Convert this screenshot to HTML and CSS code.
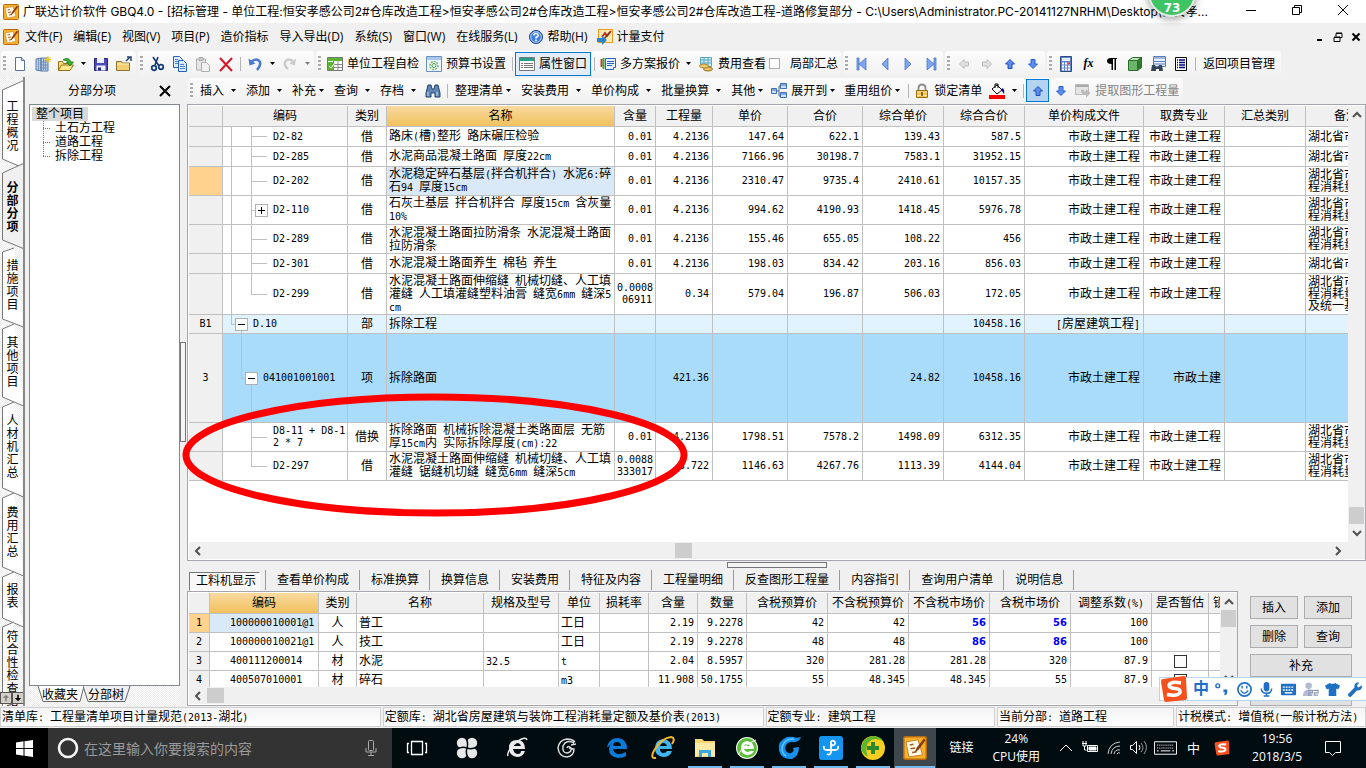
FILE: index.html
```html
<!DOCTYPE html>
<html lang="zh-CN">
<head>
<meta charset="utf-8">
<title>广联达计价软件 GBQ4.0</title>
<link rel="stylesheet" href="styles.css">
</head>
<body>
<svg class="defs" aria-hidden="true">
  <symbol id="app" viewBox="0 0 16 16"><rect x=".5" y=".5" width="15" height="15" rx="1" fill="#f8b12c" stroke="#b8690f"/><path d="M2 4l8-1.500 3 10L4 14z" fill="#fffbe8" stroke="#c07a20" stroke-width=".6"/><path d="M4.500 6l2.500-.5M5 8.500l3-.5M6 11l3-.5" stroke="#a06020"/><path d="M14 1.500L9 8l-1.500 3.500L10.500 9 15 3z" fill="#8a3b12"/></symbol>
  <symbol id="dd" viewBox="0 0 7 4"><path d="M1 0h5L3.500 3z" fill="#000"/></symbol>
  <symbol id="up" viewBox="0 0 16 16"><path d="M8 3.500l4.500 4.500h-2.500v4.500H6V8H3.500z" fill="#5b8def" stroke="#1d4fb8"/></symbol>
  <symbol id="down" viewBox="0 0 16 16"><path d="M8 12.500L3.500 8H6V3.500h4V8h2.500z" fill="#5b8def" stroke="#2a5fd0"/></symbol>
  <symbol id="clip" viewBox="0 0 16 16"><path d="M1.500 3h9v11h-9z" fill="#e6e6e6" stroke="#b0b0b0"/><path d="M4 1.500h4v3H4z" fill="#ccc" stroke="#aaa"/><path d="M6.500 6.500h5l3 3v6h-8z" fill="#f2f2f2" stroke="#b0b0b0"/></symbol>
  <symbol id="bino" viewBox="0 0 16 16"><path d="M3 2h3l1 4h2l1-4h3l2 8v4h-5v-4H6v4H1v-4z" fill="#5f84b4" stroke="#24456f"/><path d="M3 9v4M12 9v4" stroke="#c9dcf2"/></symbol>
  <symbol id="sg" viewBox="0 0 28 28"><path d="M3 4L24 1q2 0 2 2l1 20q0 2-2 2L6 27q-2 0-2-2L1 7q0-3 2-3z" fill="#f4511e"/><path d="M21 8q-10-2-12 2 0 3 6 3.500t5 4q-2 4-13 2" fill="none" stroke="#fff" stroke-width="3.600"/></symbol>
</svg>

<header class="title">
  <svg class="i16"><use href="#app"/></svg>
  <h1>广联达计价软件 GBQ4.0 - [招标管理 - 单位工程:恒安孝感公司2#仓库改造工程&gt;恒安孝感公司2#仓库改造工程&gt;恒安孝感公司2#仓库改造工程-道路修复部分 - C:\Users\Administrator.PC-20141127NRHM\Desktop\恒安孝...</h1>
  <div class="winbtns">
    <button aria-label="最小化"><svg viewBox="0 0 12 12"><path d="M1 6.500h10"/></svg></button>
    <button aria-label="还原"><svg viewBox="0 0 12 12"><path d="M1.500 3.500h7v7h-7zM3.500 3.500v-2h7v7h-2"/></svg></button>
    <button aria-label="关闭"><svg viewBox="0 0 12 12"><path d="M1 1l10 10M11 1L1 11"/></svg></button>
  </div>
</header>
<div class="ball">73</div>

<nav class="menu">
  <svg class="i16"><use href="#app"/></svg>
  <button>文件(F)</button><button>编辑(E)</button><button>视图(V)</button><button>项目(P)</button><button>造价指标</button><button>导入导出(D)</button><button>系统(S)</button><button>窗口(W)</button><button>在线服务(L)</button>
  <button class="ic"><svg class="i16" viewBox="0 0 16 16"><circle cx="8" cy="8" r="6.500" fill="#3f7de0" stroke="#1a3f8a"/><circle cx="8" cy="8" r="5.300" fill="none" stroke="#bcd6fb"/><path d="M5.800 6.500Q6 4.500 8 4.500t2.200 1.800Q10 7.500 8 8.500v1M8 10.500v1.500" fill="none" stroke="#fff" stroke-width="1.600"/></svg>帮助(H)</button>
  <button class="ic"><svg class="i16" viewBox="0 0 16 16"><rect x="1.500" y=".5" width="14" height="13" fill="#ffe9b5" stroke="#e89b1c"/><path d="M5 8l3-4 2 3 4-5" fill="none" stroke="#c0281c" stroke-width="1.800"/><path d="M13 3l-6 7" stroke="#7a3a1a" stroke-width="1.500"/><path d="M0 9h5V7l5 4-5 5v-3H0z" fill="#2a86c8"/></svg>计量支付</button>
  <div class="mdi">
    <button aria-label="最小化"><svg viewBox="0 0 10 10"><path d="M2 8h5" stroke-width="2"/></svg></button>
    <button aria-label="还原"><svg viewBox="0 0 10 10"><path d="M1 5.500h6v4H1zM3 4.500v-3h6v4H7M1 5h6M3 1h6"/></svg></button>
    <button aria-label="关闭"><svg viewBox="0 0 10 10"><path d="M1.500 1.500l7 7M8.500 1.500l-7 7" stroke-width="2"/></svg></button>
  </div>
</nav>

<div class="bar">
  <div class="grp">
    <i class="grip"></i>
    <button class="b" aria-label="新建"><svg class="i16" viewBox="0 0 16 16"><path d="M3.500 1.500h6l3 3v10h-9z" fill="#fff" stroke="#55749b"/><path d="M9.500 1.500v3h3" fill="#cfe0f4" stroke="#55749b"/></svg></button>
    <button class="b" aria-label="新建项目"><svg class="i16" viewBox="0 0 16 16"><path d="M1 3l5-1v13l-5-1zM6 2h7v13H6z" fill="#b8cfea" stroke="#5a7ba8"/><path d="M8.500 3v11M10.500 3v11M6 6h7M6 9h7M6 12h7M3.500 3v11" stroke="#5a7ba8" stroke-width=".7"/><path d="M13 0v7M9.500 3.500h7M10.500 1l5 5M15.500 1l-5 5" stroke="#f5c518"/></svg></button>
    <button class="b" aria-label="打开"><svg class="i16" viewBox="0 0 16 16"><path d="M.5 14.500v-9h4l1 2h6v2" fill="#f6dc7c" stroke="#94701c"/><path d="M.5 14.500l3-5.500h12l-3.500 5.500z" fill="#ffe88a" stroke="#94701c"/><path d="M5 4q5-4 8 2h2.500L12 10 8.500 6H10Q9 4 5 4z" fill="#35b335" stroke="#177a17" stroke-width=".8"/></svg></button>
    <button class="d" aria-label="更多"><svg><use href="#dd"/></svg></button>
    <button class="b" aria-label="保存"><svg class="i16" viewBox="0 0 16 16"><path d="M1.500 2.500h13v12h-13z" fill="#4a4ab8" stroke="#25257a"/><path d="M4 2h7v5H4zM3.500 9.500h9v5h-9z" fill="#eef0fb"/><path d="M5 11.500h3v3H5z" fill="#25257a"/></svg></button>
    <button class="b" aria-label="关闭项目"><svg class="i16" viewBox="0 0 16 16"><path d="M.5 14.500v-9h5l1 1.500h7v7.500z" fill="#f0d070" stroke="#8e7130"/><path d="M1 8h12" stroke="#fff1b8"/><path d="M10 5l4-4M11 1h4v4" stroke="#24456f" stroke-width="1.500" fill="none"/></svg></button>
  </div>
  <div class="grp">
    <i class="grip"></i>
    <button class="b" aria-label="剪切"><svg class="i16" viewBox="0 0 16 16"><path d="M4 1l6 9M9 1L6 9" stroke="#123a78" stroke-width="1.600"/><circle cx="5" cy="12" r="2.300" fill="none" stroke="#123a78" stroke-width="1.700"/><circle cx="12" cy="11" r="2.300" fill="none" stroke="#123a78" stroke-width="1.700"/></svg></button>
    <button class="b" aria-label="复制"><svg class="i16" viewBox="0 0 16 16"><path d="M1.500.5h6l3 3v8h-9z" fill="#dbe9fb" stroke="#2a62b8"/><path d="M6.500 4.500h5l3 3v8h-8z" fill="#dbe9fb" stroke="#2a62b8"/><path d="M3 3.500h3M3 5.500h3M3 7.500h3M8 8.500h4M8 10.500h5M8 12.500h5" stroke="#4a86dc"/></svg></button>
    <button class="b" aria-label="粘贴"><svg class="i16"><use href="#clip"/></svg></button>
    <button class="b" aria-label="删除"><svg class="i16" viewBox="0 0 16 16"><path d="M2 2l12 13M14 2L2 15" stroke="#d8152a" stroke-width="2"/></svg></button>
    <i class="sep"></i>
    <button class="b" aria-label="撤销"><svg class="i16" viewBox="0 0 16 16"><path d="M4 6q6-5 9 0 1 4-3 8" fill="none" stroke="#4a78d0" stroke-width="2.500"/><path d="M1.500 2.500l1 7 6-2z" fill="#4a78d0"/></svg></button>
    <button class="d" aria-label="更多"><svg><use href="#dd"/></svg></button>
    <button class="b" aria-label="重做"><svg class="i16" viewBox="0 0 16 16"><path d="M12 6Q6 1 3 6q-1 4 3 7" fill="none" stroke="#ccc" stroke-width="2.500"/><path d="M14 2.500l-1 7-6-2z" fill="#ccc"/></svg></button>
    <button class="d" aria-label="更多"><svg class="dim"><use href="#dd"/></svg></button>
  </div>
  <div class="grp">
    <i class="grip"></i>
    <button class="l"><svg class="i16" viewBox="0 0 16 16"><path d="M.5 1.500h15v13H.5z" fill="#fff" stroke="#777"/><path d="M1 2h14v3H1z" fill="#5cb531"/><path d="M1 8.500h14M1 11.500h14M6.500 5v9M11 5v9" stroke="#888"/><path d="M1 6h6v8H1z" fill="#5cb531"/><path d="M2 10l2 2 3-4" fill="none" stroke="#fff"/></svg>单位工程自检</button>
    <button class="l"><svg class="i16" viewBox="0 0 16 16"><path d="M.5.500h15v15H.5z" fill="#eef4fb" stroke="#6a8fc0"/><path d="M1 1h14v3H1z" fill="#a8c8ec"/><circle cx="8" cy="9.500" r="4" fill="none" stroke="#7cb87c" stroke-width="1.500" stroke-dasharray="2 1"/><circle cx="8" cy="9.500" r="2" fill="none" stroke="#4d9d4d"/></svg>预算书设置</button>
    <i class="sep"></i>
    <button class="l on"><svg class="i16" viewBox="0 0 16 16"><path d="M.5 1.500h15v13H.5z" fill="#fff" stroke="#777"/><path d="M1 2h14v3H1z" fill="#26a08c"/><path d="M2 7.500h2M5 7.500h9M2 9.500h2M5 9.500h9M2 11.500h2M5 11.500h9" stroke="#777"/></svg>属性窗口</button>
    <i class="sep"></i>
    <button class="l"><svg class="i16" viewBox="0 0 16 16"><path d="M1.500 3v8" stroke="#d33" stroke-width="2"/><path d="M3.500 2v11" stroke="#3a3" stroke-width="2"/><path d="M5.500 2.500h10v9h-2v2h-8z" fill="#e8f1fd" stroke="#2463c4"/><path d="M7 5.500h7M7 7.500h7M7 9.500h5" stroke="#2463c4"/></svg>多方案报价</button>
    <button class="d w" aria-label="更多"><svg><use href="#dd"/></svg></button>
    <button class="l"><svg class="i16" viewBox="0 0 16 16"><path d="M2.500 1.500h11v9h-11z" fill="#c9ecf5" stroke="#5aa8c0"/><path d="M3 4h10M3 7h10M6 2v8M10 2v8" stroke="#5aa8c0"/><ellipse cx="10" cy="13" rx="4.500" ry="2" fill="#eac060" stroke="#9a7020"/><ellipse cx="6" cy="10" rx="4.500" ry="2" fill="#f0ca70" stroke="#b08430"/></svg>费用查看</button>
    <label class="chk"><input type="checkbox">局部汇总</label>
  </div>
  <div class="grp">
    <i class="grip"></i>
    <button class="b" aria-label="首条"><svg class="i16" viewBox="0 0 16 16"><path d="M12 2v12L5 8zM3 2h2v12H3z" fill="#7da7ee" stroke="#3a6cc8" stroke-width=".7"/></svg></button>
    <button class="b" aria-label="上一条"><svg class="i16" viewBox="0 0 16 16"><path d="M11 2v12L5 8z" fill="#7da7ee" stroke="#3a6cc8" stroke-width=".7"/></svg></button>
    <button class="b" aria-label="下一条"><svg class="i16" viewBox="0 0 16 16"><path d="M5 2v12l6-6z" fill="#7da7ee" stroke="#3a6cc8" stroke-width=".7"/></svg></button>
    <button class="b" aria-label="末条"><svg class="i16" viewBox="0 0 16 16"><path d="M4 2v12l7-6zM11 2h2v12h-2z" fill="#7da7ee" stroke="#3a6cc8" stroke-width=".7"/></svg></button>
  </div>
  <div class="grp">
    <i class="grip"></i>
    <button class="b" aria-label="左移"><svg class="i16" viewBox="0 0 16 16"><path d="M3.500 8L8 3.500V6h4.500v4H8v2.500z" fill="#e2e2e2" stroke="#bcbcbc"/></svg></button>
    <button class="b" aria-label="右移"><svg class="i16" viewBox="0 0 16 16"><path d="M12.500 8L8 3.500V6H3.500v4H8v2.500z" fill="#e2e2e2" stroke="#bcbcbc"/></svg></button>
    <button class="b" aria-label="上移"><svg class="i16"><use href="#up"/></svg></button>
    <button class="b" aria-label="下移"><svg class="i16"><use href="#down"/></svg></button>
  </div>
  <div class="grp">
    <i class="grip"></i>
    <button class="b" aria-label="计算器"><svg class="i16" viewBox="0 0 16 16"><path d="M2.500.5h11v15h-11z" fill="#5f84c8" stroke="#2c4a86"/><path d="M4 2h8v3H4z" fill="#e4eefb"/><path d="M4 7.500h8M4 10.500h8M4 13.500h8" stroke="#fff" stroke-width="2" stroke-dasharray="2 1"/><path d="M10 7.500h2" stroke="#e03030" stroke-width="2"/></svg></button>
    <button class="b fx" aria-label="函数">fx</button>
    <button class="b" aria-label="段落"><svg class="i16" viewBox="0 0 16 16"><path d="M13 2v1h-1v11h-1.500V3H9v11H7.500V8Q3 8 3 5t4-3z" fill="#000"/></svg></button>
    <button class="b" aria-label="图元"><svg class="i16" viewBox="0 0 16 16"><path d="M1.500 4.500h9v10h-9z" fill="#6db56d" stroke="#2d6e2d"/><path d="M1.500 4.500l4-3h9l-4 3z" fill="#b8e4b8" stroke="#2d6e2d"/><path d="M10.500 4.500l4-3v10l-4 3z" fill="#2f7a2f" stroke="#2d6e2d"/></svg></button>
    <button class="b" aria-label="查找"><svg class="i16" viewBox="0 0 16 16"><path d="M3.500.5h12v10h-12z" fill="#e6effb" stroke="#5a7fb8"/><path d="M4 2h11M4 5.500h11M4 8h11" stroke="#5a7fb8"/><path d="M2 9h3l1 2h2l1-2h3l1 6H9v-2H6v2H1z" fill="#345"/></svg></button>
    <button class="b" aria-label="列表"><svg class="i16" viewBox="0 0 16 16"><path d="M2.500 1.500h11v13h-11z" fill="#fff" stroke="#000"/><path d="M4 4h1M6 4h6M4 6.500h1M6 6.500h6M4 9h1M6 9h6M4 11.500h1M6 11.500h6" stroke="#000080" stroke-width="1.300"/></svg></button>
    <i class="sep"></i>
    <button class="l t">返回项目管理</button>
  </div>
</div>

<div class="work">
  <nav class="vtabs">
    <button style="height:83px"><svg width="25" height="93"><path d="M23.500.500L2.500 10v69l21 9z"/></svg><span>工程概况</span></button>
    <button class="cur" style="height:79px"><svg width="25" height="89"><path d="M24.500 0L2.500 10v67l22 9z"/></svg><span>分部分项</span></button>
    <button style="height:77px"><svg width="25" height="87"><path d="M14 6L2.500 10v67l21 8"/></svg><span>措施项目</span></button>
    <button style="height:78px"><svg width="25" height="88"><path d="M14 5L2.500 10v68l21 9"/></svg><span>其他项目</span></button>
    <button style="height:91px"><svg width="25" height="101"><path d="M14 5L2.500 10v81l21 9"/></svg><span>人材机汇总</span></button>
    <button style="height:79px"><svg width="25" height="89"><path d="M14 5L2.500 10v69l21 9"/></svg><span>费用汇总</span></button>
    <button style="height:50px"><svg width="25" height="60"><path d="M14 5L2.500 10v41l21 9"/></svg><span>报表</span></button>
    <button style="height:96px"><svg width="25" height="106"><path d="M14 5L2.500 10v95"/></svg><span>符合性检查<br>结</span></button>
    <div class="vscroll"><button aria-label="上" disabled><svg viewBox="0 0 10 10"><path d="M5 1l4 4H6v4H4V5H1z" fill="#808080"/></svg></button><button aria-label="下"><svg viewBox="0 0 10 10"><path d="M5 9L1 5h3V1h2v4h3z" fill="#000"/></svg></button></div>
  </nav>

  <aside class="side">
    <div class="sidehead"><h2>分部分项</h2><button aria-label="关闭"><svg viewBox="0 0 12 12"><path d="M1 1l10 10M11 1L1 11" stroke="#000" stroke-width="2"/></svg></button></div>
    <div class="tree">
      <span class="root">整个项目</span>
      <ul><li>土石方工程</li><li>道路工程</li><li>拆除工程</li></ul>
    </div>
    <div class="btabs">
      <button><svg width="48" height="17"><path d="M1 0l5 15.500h37l4-15.500" fill="#fff" stroke="#666"/></svg><span>收藏夹</span></button><button><svg width="48" height="17"><path d="M0 0l5 15.500h37l5-15.500" fill="#f0f0f0" stroke="#666"/></svg><span>分部树</span></button>
    </div>
  </aside>
  <div class="vsplit"><i></i></div>

  <main class="main">
    <div class="bar two">
      <div class="grp">
        <i class="grip"></i>
        <button class="t a w">插入<svg><use href="#dd"/></svg></button><button class="t a w">添加<svg><use href="#dd"/></svg></button><button class="t a">补充<svg><use href="#dd"/></svg></button><button class="t a w">查询<svg><use href="#dd"/></svg></button><button class="t a w">存档<svg><use href="#dd"/></svg></button>
        <button class="b" aria-label="查找"><svg class="i16"><use href="#bino"/></svg></button>
        <i class="sep"></i>
        <button class="t a">整理清单<svg><use href="#dd"/></svg></button><button class="t a w">安装费用<svg><use href="#dd"/></svg></button><button class="t a w">单价构成<svg><use href="#dd"/></svg></button><button class="t a w">批量换算<svg><use href="#dd"/></svg></button><button class="t a">其他<svg><use href="#dd"/></svg></button>
        <button class="l a"><svg class="i16" viewBox="0 0 16 16"><path d="M4 8h4M8 3v10M8 3h2M8 13h2" stroke="#567" fill="none"/><path d="M.5 5.500h5v5h-5zM9.500.500h6v5h-6zM9.500 9.500h6v5h-6z" fill="#cfe1f8" stroke="#3d6fb8"/><path d="M1 7h4M10 2h5M10 11h5" stroke="#3d6fb8"/></svg>展开到<svg class="ar"><use href="#dd"/></svg></button>
        <button class="t a">重用组价<svg><use href="#dd"/></svg></button>
        <i class="sep"></i>
        <button class="l"><svg class="i16" viewBox="0 0 16 16"><path d="M4.500 7V4.500Q5 1.500 8 1.500t3.500 3V7" fill="none" stroke="#8c8c8c" stroke-width="1.800"/><path d="M2.500 7.500h11v7h-11z" fill="#f2c24a" stroke="#9a6c12"/><path d="M3 9h10M3 12.500h10" stroke="#fbe6a6"/><path d="M8 9v4" stroke="#6a4a10" stroke-width="1.500"/></svg>锁定清单</button>
        <button class="b" aria-label="填充颜色"><svg class="i16" viewBox="0 0 16 16"><path d="M3 6l5-4 5 5-5 4z" fill="#fff" stroke="#000"/><path d="M6 5V1h3v4" fill="none" stroke="#000"/><path d="M13 5q3 1 2 6l-2-3z" fill="#000080"/><path d="M0 12h16v4H0z" fill="#f00"/></svg></button><button class="d" aria-label="更多"><svg><use href="#dd"/></svg></button>
        <i class="sep"></i>
        <button class="b on" aria-label="上移"><svg class="i16"><use href="#up"/></svg></button><button class="b" aria-label="下移"><svg class="i16"><use href="#down"/></svg></button>
        <button class="l dis" disabled><svg class="i16" viewBox="0 0 16 16"><path d="M.5 1.500h13v10H.5z" fill="#e4e4e4" stroke="#bbb"/><path d="M1 3h12" stroke="#aaa" stroke-width="2"/><path d="M6 7q0 5 5 5v3l4.500-5L11 6v2.500q-2 0-3-2z" fill="#bbb"/></svg>提取图形工程量</button>
      </div>
    </div>

    <section class="panel top">
      <div class="clip">
      <table class="grid g1">
        <colgroup><col class="c34"><col class="c125"><col class="c39"><col class="c228"><col class="c41"><col class="c57"><col class="c75"><col class="c75"><col class="c81"><col class="c81"><col class="c119"><col class="c81"><col class="c81"><col></colgroup>
        <thead><tr><th></th><th>编码</th><th>类别</th><th class="hot">名称</th><th>含量</th><th>工程量</th><th>单价</th><th>合价</th><th>综合单价</th><th>综合合价</th><th>单价构成文件</th><th>取费专业</th><th>汇总类别</th><th class="rem">备注</th></tr></thead>
        <tbody>
        <tr class="h20"><th></th><td class="k leaf">D2-82</td><td class="c">借</td><td>路床<b>(</b>槽<b>)</b>整形<b> </b>路床碾压检验</td><td class="n">0.01</td><td class="n">4.2136</td><td class="n">147.64</td><td class="n">622.1</td><td class="n">139.43</td><td class="n">587.5</td><td class="r">市政土建工程</td><td class="r">市政土建工程</td><td></td><td>湖北省市</td></tr>
        <tr class="h20"><th></th><td class="k leaf">D2-285</td><td class="c">借</td><td>水泥商品混凝土路面<b> </b>厚度<b>22cm</b></td><td class="n">0.01</td><td class="n">4.2136</td><td class="n">7166.96</td><td class="n">30198.7</td><td class="n">7583.1</td><td class="n">31952.15</td><td class="r">市政土建工程</td><td class="r">市政土建工程</td><td></td><td>湖北省市</td></tr>
        <tr class="h29"><th class="sel"></th><td class="k leaf">D2-202</td><td class="c">借</td><td class="pick">水泥稳定碎石基层<b>(</b>拌合机拌合<b>) </b>水泥<b>6:</b>碎<br>石<b>94 </b>厚度<b>15cm</b></td><td class="n">0.01</td><td class="n">4.2136</td><td class="n">2310.47</td><td class="n">9735.4</td><td class="n">2410.61</td><td class="n">10157.35</td><td class="r">市政土建工程</td><td class="r">市政土建工程</td><td></td><td>湖北省市<br>程消耗量</td></tr>
        <tr class="h29"><th></th><td class="k stem"><div><button class="tg" aria-label="展开"><svg viewBox="0 0 11 11"><path d="M2 5.500h7M5.500 2v7"/></svg></button>D2-110</div></td><td class="c">借</td><td>石灰土基层<b> </b>拌合机拌合<b> </b>厚度<b>15cm </b>含灰量<br><b>10%</b></td><td class="n">0.01</td><td class="n">4.2136</td><td class="n">994.62</td><td class="n">4190.93</td><td class="n">1418.45</td><td class="n">5976.78</td><td class="r">市政土建工程</td><td class="r">市政土建工程</td><td></td><td>湖北省市<br>程消耗量</td></tr>
        <tr class="h29"><th></th><td class="k leaf">D2-289</td><td class="c">借</td><td>水泥混凝土路面拉防滑条<b> </b>水泥混凝土路面<br>拉防滑条</td><td class="n">0.01</td><td class="n">4.2136</td><td class="n">155.46</td><td class="n">655.05</td><td class="n">108.22</td><td class="n">456</td><td class="r">市政土建工程</td><td class="r">市政土建工程</td><td></td><td>湖北省市<br>程消耗量</td></tr>
        <tr class="h20"><th></th><td class="k leaf">D2-301</td><td class="c">借</td><td>水泥混凝土路面养生<b> </b>棉毡<b> </b>养生</td><td class="n">0.01</td><td class="n">4.2136</td><td class="n">198.03</td><td class="n">834.42</td><td class="n">203.16</td><td class="n">856.03</td><td class="r">市政土建工程</td><td class="r">市政土建工程</td><td></td><td>湖北省市</td></tr>
        <tr class="h41"><th></th><td class="k leaf end">D2-299</td><td class="c">借</td><td>水泥混凝土路面伸缩缝<b> </b>机械切缝、人工填<br>灌缝<b> </b>人工填灌缝塑料油膏<b> </b>缝宽<b>6mm </b>缝深<b>5</b><br><b>cm</b></td><td class="n">0.0008<br>06911</td><td class="n">0.34</td><td class="n">579.04</td><td class="n">196.87</td><td class="n">506.03</td><td class="n">172.05</td><td class="r">市政土建工程</td><td class="r">市政土建工程</td><td></td><td>湖北省市<br>程消耗量<br>及统一基</td></tr>
        <tr class="h19 lv1"><th>B1</th><td class="k p1"><div><button class="tg" aria-label="折叠"><svg viewBox="0 0 11 11"><path d="M2 5.500h7"/></svg></button>D.10</div></td><td class="c">部</td><td>拆除工程</td><td></td><td></td><td></td><td></td><td></td><td class="n">10458.16</td><td class="r"><b>[</b>房屋建筑工程<b>]</b></td><td></td><td></td><td></td></tr>
        <tr class="h89 lv2"><th>3</th><td class="k p2"><div><button class="tg" aria-label="折叠"><svg viewBox="0 0 11 11"><path d="M2 5.500h7"/></svg></button>041001001001</div></td><td class="c">项</td><td>拆除路面</td><td></td><td class="n">421.36</td><td></td><td></td><td class="n">24.82</td><td class="n">10458.16</td><td class="r">市政土建工程</td><td class="r">市政土建</td><td></td><td></td></tr>
        <tr class="h29"><th></th><td class="k leaf solo">D8-11 + D8-1<br>2 * 7</td><td class="c">借换</td><td>拆除路面<b> </b>机械拆除混凝土类路面层<b> </b>无筋<br>厚<b>15cm</b>内<b> </b>实际拆除厚度<b>(cm):22</b></td><td class="n">0.01</td><td class="n">4.2136</td><td class="n">1798.51</td><td class="n">7578.2</td><td class="n">1498.09</td><td class="n">6312.35</td><td class="r">市政土建工程</td><td class="r">市政土建工程</td><td></td><td>湖北省市<br>程消耗量</td></tr>
        <tr class="h29"><th></th><td class="k leaf solo end">D2-297</td><td class="c">借</td><td>水泥混凝土路面伸缩缝<b> </b>机械切缝、人工填<br>灌缝<b> </b>锯缝机切缝<b> </b>缝宽<b>6mm </b>缝深<b>5cm</b></td><td class="n">0.0088<br>333017</td><td class="n">3.722</td><td class="n">1146.63</td><td class="n">4267.76</td><td class="n">1113.39</td><td class="n">4144.04</td><td class="r">市政土建工程</td><td class="r">市政土建工程</td><td></td><td>湖北省市<br>程消耗量</td></tr>
        </tbody>
      </table>
      </div>
      <div class="vs"><svg viewBox="0 0 10 10"><path d="M1 7l4-4 4 4"/></svg><i class="low"></i><svg viewBox="0 0 10 10"><path d="M1 3l4 4 4-4"/></svg></div>
      <div class="hs"><svg viewBox="0 0 10 10"><path d="M7 1L3 5l4 4"/></svg><i class="mid"></i><svg viewBox="0 0 10 10"><path d="M3 1l4 4-4 4"/></svg></div>
    </section>

    <div class="hsplit"><i></i></div>
    <nav class="ltabs"><button class="cur">工料机显示</button><button>查看单价构成</button><button>标准换算</button><button>换算信息</button><button>安装费用</button><button>特征及内容</button><button>工程量明细</button><button>反查图形工程量</button><button>内容指引</button><button>查询用户清单</button><button>说明信息</button></nav>

    <div class="lower">
      <section class="panel">
        <div class="clip">
        <table class="grid g2">
          <colgroup><col class="c21"><col class="c109"><col class="c38"><col class="c127"><col class="c75"><col class="c41"><col class="c49"><col class="c49"><col class="c49"><col class="c81"><col class="c81"><col class="c81"><col class="c81"><col class="c81"><col class="c57"><col></colgroup>
          <thead><tr><th></th><th class="hot">编码</th><th>类别</th><th>名称</th><th>规格及型号</th><th>单位</th><th>损耗率</th><th>含量</th><th>数量</th><th>含税预算价</th><th>不含税预算价</th><th>不含税市场价</th><th>含税市场价</th><th>调整系数<b>(%)</b></th><th>是否暂估</th><th class="lock">锁定</th></tr></thead>
          <tbody>
          <tr><th class="sel">1</th><td class="k pick">100000010001@1</td><td class="c">人</td><td>普工</td><td></td><td>工日</td><td></td><td class="n">2.19</td><td class="n">9.2278</td><td class="n">42</td><td class="n">42</td><td class="n blue">56</td><td class="n blue">56</td><td class="n">100</td><td></td><td></td></tr>
          <tr><th>2</th><td class="k">100000010021@1</td><td class="c">人</td><td>技工</td><td></td><td>工日</td><td></td><td class="n">2.19</td><td class="n">9.2278</td><td class="n">48</td><td class="n">48</td><td class="n blue">86</td><td class="n blue">86</td><td class="n">100</td><td></td><td></td></tr>
          <tr><th>3</th><td class="k">400111200014</td><td class="c">材</td><td>水泥</td><td><b>32.5</b></td><td><b>t</b></td><td></td><td class="n">2.04</td><td class="n">8.5957</td><td class="n">320</td><td class="n">281.28</td><td class="n">281.28</td><td class="n">320</td><td class="n">87.9</td><td class="c"><input type="checkbox" aria-label="暂估"></td><td></td></tr>
          <tr><th>4</th><td class="k">400507010001</td><td class="c">材</td><td>碎石</td><td></td><td><b>m3</b></td><td></td><td class="n">11.908</td><td class="n">50.1755</td><td class="n">55</td><td class="n">48.345</td><td class="n">48.345</td><td class="n">55</td><td class="n">87.9</td><td class="c"><input type="checkbox" aria-label="暂估"></td><td></td></tr>
          </tbody>
        </table>
        </div>
        <div class="vs"><svg viewBox="0 0 10 10"><path d="M1 7l4-4 4 4"/></svg><i></i><svg class="last" viewBox="0 0 10 10"><path d="M1 3l4 4 4-4"/></svg></div>
        <div class="hs"><svg viewBox="0 0 10 10"><path d="M7 1L3 5l4 4"/></svg><i></i></div>
      </section>
      <div class="acts"><button>插入</button><button>添加</button><button>删除</button><button>查询</button><button class="full">补充</button><button class="full" aria-label="更多操作"></button></div>
    </div>
  </main>
</div>

<footer class="status"><span>清单库<b>: </b>工程量清单项目计量规范<b>(2013-</b>湖北<b>)</b></span><span>定额库<b>: </b>湖北省房屋建筑与装饰工程消耗量定额及基价表<b>(2013)</b></span><span>定额专业<b>: </b>建筑工程</span><span>当前分部<b>: </b>道路工程</span><span>计税模式<b>: </b>增值税<b>(</b>一般计税方法<b>)</b></span></footer>

<div class="taskbar">
  <button class="start" aria-label="开始"><svg width="17" height="17" viewBox="0 0 17 17"><path d="M0 2.500L7.500 1.300V8H0zM8.500 1.200L17 0v8H8.500zM0 9h7.500v6.700L0 14.500zM8.500 9H17v8l-8.500-1.200z" fill="#fff"/></svg></button>
  <div class="search"><svg width="24" height="24"><circle cx="12" cy="12" r="9" fill="none" stroke="#f4f4f4" stroke-width="2.600"/></svg><input type="text" aria-label="搜索" placeholder="在这里输入你要搜索的内容"><svg width="14" height="18" viewBox="0 0 14 18"><rect x="4.500" y="1.500" width="5" height="10" rx="1" fill="none" stroke="#aaa"/><path d="M2 9v4h10V9M7 13v4M4 16.500h6" fill="none" stroke="#aaa"/></svg></div>
  <div class="apps">
    <button class="wd" aria-label="任务视图"><svg viewBox="0 0 24 24"><path d="M6.500 5.500h11v13h-11zM4 7.500H2.500v9H4M20 7.500h1.500v9H20" fill="none" stroke="#fff" stroke-width="1.300"/></svg></button>
    <button class="wd" aria-label="风扇"><svg viewBox="0 0 24 24"><g fill="#e8e8e8"><circle cx="7" cy="7" r="5.200"/><circle cx="17" cy="7" r="5.200"/><circle cx="7" cy="17" r="5.200"/><circle cx="17" cy="17" r="5.200"/><path d="M7 7h10v10H7z"/></g><path d="M12 12Q14 6 10 1M12 12q6 2 11-2M12 12q-2 6 2 11M12 12Q6 10 1 14" stroke="#010c11" fill="none" stroke-width="1.500"/></svg></button>
    <button class="wd" aria-label="浏览器"><svg viewBox="0 0 24 24"><path d="M20 15q-2 6-8 6-8-1-8-9t8-8q8 0 8 9H8q1 5 5 5 3 0 3-3zM8 10h8q-1-3-4-3t-4 3z" fill="#ececec" fill-rule="evenodd"/><path d="M3 20Q1 15 13 5q8-5 9-1" fill="none" stroke="#ececec" stroke-width="1.500"/></svg></button>
    <button class="wd" aria-label="助手"><svg viewBox="0 0 24 24"><path d="M20 6q-3-3-8-3-8 1-9 9 1 9 9 9 7-1 7-8l-5-1M19 7q-8-4-11 3-1 7 4 7 5-1 4-5-3-3-4 0M16 9l5-1" fill="none" stroke="#ddd" stroke-width="1.500"/></svg></button>
    <button class="wd" aria-label="Edge"><svg viewBox="0 0 24 24"><path d="M2 11Q4 2 13 2q9 1 9 11H8q1 5 6 5 4 0 7-2v4q-3 2-8 2-9-1-9-9 0-5 6-7-2 2-2 4h8q0-4-4-4-5 0-9 5z" fill="#0a7bd8"/></svg></button>
    <button aria-label="IE"><svg viewBox="0 0 24 24"><path d="M21 15q-2 6-9 6-8-1-8-9t8-9q9 1 9 10H9q0 4 3.500 4 2.500 0 3.500-2zM9 10h7q-1-3-3.500-3T9 10z" fill="#42b4f0" fill-rule="evenodd"/><path d="M5 22Q-2 23 4 13 11 2 20 1q5 1 1 7" fill="none" stroke="#f0b92c" stroke-width="2"/></svg></button>
    <button class="run" aria-label="资源管理器"><svg viewBox="0 0 24 24"><path d="M2 3h7l2 2h11v16H2z" fill="#f7d774"/><path d="M2 7h20v13H2z" fill="#fce9a5"/><path d="M6 21v-7h12v7h-3v-4H9v4z" fill="#3ba7e0"/></svg></button>
    <button class="run" aria-label="安全浏览器"><svg viewBox="0 0 24 24"><circle cx="12" cy="12" r="11" fill="#f3fbef"/><circle cx="12" cy="12" r="10" fill="#5bbf3a"/><path d="M19 15q-2 4-7 4-6-1-6-7t6-7q7 1 7 8H9q1 3 4 3l3-1zM9 10h6q-1-2-3-2t-3 2z" fill="#fff" fill-rule="evenodd"/><path d="M3 19Q8 9 21 4" stroke="#fff" fill="none"/></svg></button>
    <button class="run" aria-label="广联达"><svg viewBox="0 0 24 24"><path d="M24 1q-2 6-9 5-6 0-7 6 1 6 6 5 4-2 2-5l6-1q0 9-7 12-10 1-13-8Q0 5 10 1q7-1 9 1z" fill="#1690ec"/><path d="M17 3Q7 2 5 12q0 6 4 8" fill="none" stroke="#5cc8ff" stroke-width="1.500"/></svg></button>
    <button class="run" aria-label="驱动"><svg viewBox="0 0 24 24"><rect width="24" height="24" rx="3" fill="#1496f0"/><path d="M12 5v11q-1 4-4 2M12 5q4-1 4 2t-4 2M5 10q-1 4 3 4h8q4 0 3-4" fill="none" stroke="#fff" stroke-width="1.800"/></svg></button>
    <button class="run" aria-label="安全卫士"><svg viewBox="0 0 24 24"><circle cx="12" cy="12" r="12" fill="#f8cf20"/><path d="M0 12Q2 1 12 0q7 0 10 5-8-4-13 0-6 5-2 16-6-3-7-9z" fill="#5fb52b"/><path d="M10 6h4v4h4v4h-4v4h-4v-4H6v-4h4z" fill="#2b8b2b"/></svg></button>
    <button class="run act" aria-label="计价软件"><svg viewBox="0 0 16 16"><use href="#app"/></svg></button>
  </div>
  <div class="tray">
    <button>链接</button>
    <div class="cpu">24%<br>CPU使用</div>
    <div class="ti">
    <svg viewBox="0 0 18 18"><path d="M3 12l6-6 6 6"/></svg>
    <svg viewBox="0 0 18 18"><path d="M6.500 6.500h10v6h-10z"/><path d="M8 8h7v3H8z" fill="#fff"/><path d="M1 4.500h5M2 2v2M5 2v2M2 5v2h3V5M3.500 7v4h2"/></svg>
    <svg viewBox="0 0 18 18"><path d="M3 15Q4 4 15 3M6 15q1-8 9-8M9 15q1-5 6-4M12 15q1-2 3-1" stroke="#ccc"/></svg>
    <svg viewBox="0 0 18 18"><path d="M1.500 6.500h2l4-4v12l-4-4h-2zM10 6q2 3 0 5"/><path d="M12 4q4 5 0 9M15 2q5 6 0 13" stroke="#999"/></svg>
    </div>
    <svg class="kb" viewBox="0 0 24 14"><path d="M.5.500h23v13H.5z"/><path d="M3 4h18M3 7h18" stroke-dasharray="1 1"/><path d="M3 10h2M7 10h10M19 10h2"/></svg>
    <span class="zh">中</span>
    <svg class="sgi" viewBox="0 0 28 28"><use href="#sg"/></svg>
    <time>19:56<br>2018/3/5</time>
    <svg class="note" viewBox="0 0 18 18"><path d="M1.500 2.500h15v11h-5l-3 3-3-3h-4z"/></svg>
  </div>
</div>

<svg class="mark" viewBox="0 0 508 124"><ellipse cx="254" cy="62" rx="249" ry="58" fill="none" stroke="#f00" stroke-width="7"/></svg>

<div class="ime">
  <svg class="big" viewBox="0 0 28 28"><use href="#sg"/></svg>
  <strong>中</strong>
  <svg viewBox="0 0 18 18"><circle cx="4" cy="5" r="2" fill="none" stroke="#1f6fc5" stroke-width="1.500"/><path d="M10 9h4v3q0 3-3 3v-2q1 0 1-1h-2z" fill="#1f6fc5"/></svg>
  <svg viewBox="0 0 18 18"><circle cx="9" cy="9" r="7" fill="none" stroke="#1f6fc5" stroke-width="1.800"/><path d="M5 10q4 6 8 0M6.500 5v3M11.500 5v3" fill="none" stroke="#1f6fc5" stroke-width="1.500"/></svg>
  <svg viewBox="0 0 18 18"><rect x="6" y="1" width="6" height="10" rx="3" fill="#1f6fc5"/><path d="M3.500 8q0 5 5.500 5t5.500-5M9 13v3M6 16h6" fill="none" stroke="#1f6fc5" stroke-width="1.600"/></svg>
  <svg viewBox="0 0 18 18"><rect x="1" y="3" width="16" height="12" rx="1" fill="#1f6fc5"/><path d="M3 6.500h12M3 9.500h12" stroke="#fff" stroke-width="1.500" stroke-dasharray="2 1"/><path d="M5 12.500h8" stroke="#fff" stroke-width="1.500"/></svg>
  <svg viewBox="0 0 18 18"><circle cx="7" cy="5" r="3.500" fill="#b4bcd4"/><path d="M1 16q0-7 6-7 2 0 3 1v6z" fill="#b4bcd4"/><path d="M6 10h5v2.500H7V15h4M12 10h5v2.500h-4V15h4" fill="none" stroke="#8f9abb" stroke-width="1.300"/></svg>
  <svg viewBox="0 0 18 18"><path d="M6 2q3 2 6 0l5 3-2 4-2-1v8H5V8L3 9 1 5z" fill="#1f6fc5"/></svg>
  <svg viewBox="0 0 18 18"><path d="M2 14l7-7q-1-4 3-5.500h2L11.500 5l1.500 2 4-2.500q0 6-5.500 5.500l-6.500 7q-3-.5-3-3z" fill="#1f6fc5"/></svg>
</div>
</body>
</html>
```

FILE: styles.css
```css
* { box-sizing: border-box; }
html, body { margin: 0; height: 100%; }
body {
  display: flex; flex-direction: column; height: 100vh; overflow: hidden; position: relative;
  background: #f0f0f0; color: #000;
  font: 12px/14px "Liberation Sans", "Noto Sans CJK SC", sans-serif;
}
button { font: inherit; color: inherit; background: none; border: 0; padding: 0; margin: 0; white-space: nowrap; }
h1, h2 { margin: 0; font: inherit; }
.defs { position: absolute; width: 0; height: 0; }
.i16 { width: 16px; height: 16px; flex: none; }
b { font: 10px/12px "DejaVu Sans Mono", monospace; white-space: pre; }

/* title and menu */
.title { display: flex; align-items: center; height: 23px; flex: none; background: #fff; padding-left: 3px; gap: 4px; font-family: Inter, "Noto Sans CJK SC", sans-serif; }
.title h1 { flex: none; white-space: nowrap; }
.winbtns { display: flex; margin-left: auto; }
.winbtns button { width: 46px; height: 22px; }
.winbtns svg { width: 12px; height: 12px; fill: none; stroke: #000; }
.ball { position: absolute; left: 1148px; top: -31px; width: 48px; height: 48px; border-radius: 50%; border: 2px solid #e4ebe4; background: #3fc463; color: #fff; font: bold 12px/74px "DejaVu Sans", sans-serif; text-align: center; box-shadow: 0 2px 8px #0006; }
.menu { display: flex; align-items: center; gap: 1px; height: 27px; flex: none; padding-left: 3px; font-family: "Open Sans", "Noto Sans CJK SC", sans-serif; }
.menu > button { padding: 0 5px; height: 24px; }
.menu .ic { display: flex; align-items: center; gap: 4px; padding: 0 4px; }
.mdi { margin-left: auto; display: flex; gap: 8px; padding-right: 5px; }
.mdi svg { width: 10px; height: 10px; fill: none; stroke: #000; display: block; }

/* toolbars */
.bar { display: flex; gap: 2px; height: 27px; flex: none; padding: 1px 0 0 1px; }
.grp { display: flex; align-items: center; height: 25px; background: linear-gradient(#fcfcfc, #f1f1f1); border-radius: 3px; padding-right: 1px; }
.grip { width: 3px; height: 15px; margin: 0 2px; background: repeating-linear-gradient(#aaa 0 2px, transparent 2px 4px); flex: none; }
.sep { width: 1px; height: 14px; background: #b4b4b4; margin: 0 2px 0 3px; flex: none; }
.b { width: 23px; height: 23px; display: grid; place-items: center; flex: none; }
.d { width: 12px; height: 23px; display: grid; place-items: center; }
.d.w { width: 14px; }
.d svg, .a svg:last-child { width: 7px; height: 4px; flex: none; }
.dim { opacity: .5; }
.l { display: flex; align-items: center; height: 24px; gap: 4px; padding: 0 3px 0 4px; }
.l.on { border: 1px solid #0078d7; background: #e3edf7; padding: 0 3px; }
.l.on ~ .l { padding: 0 1px 0 3px; }
.l.t { padding: 0 5px; }
.b.on { border: 1px solid #0078d7; background: #b3d3f1; }
.fx { font: italic bold 12px "Liberation Serif", serif; }
.chk { display: flex; align-items: center; gap: 10px; padding: 0 2px; white-space: nowrap; }
input[type="checkbox"] { appearance: none; margin: 0; width: 11px; height: 11px; border: 1px solid #aaa; background: #fcfcfc; }
.t.a { display: flex; align-items: center; height: 23px; padding: 0 4px 0 5px; gap: 2px; }
.t.a.w { gap: 6px; }
.two .l { padding: 0 3px; }
.l.a .ar { margin-left: -2px; }
.dis { color: #838383; }

/* work area */
.work { flex: 1; display: flex; min-height: 0; }
.vtabs { width: 25px; flex: none; position: relative; padding-top: 8px; overflow: hidden; border-right: 2px solid #888; background: repeating-conic-gradient(#fff 0 25%, #ebebeb 0 50%) 0 0 / 2px 2px; }
.vtabs > button { display: block; position: relative; width: 25px; }
.vtabs > button > svg { position: absolute; left: 0; top: -5px; fill: #fff; stroke: #777; }
.vtabs > button > span { position: relative; display: block; width: 12px; margin: 0 auto; white-space: normal; line-height: 13px; word-break: break-all; }
.vtabs .cur { z-index: 1; font-weight: bold; }
.vtabs .cur > svg { fill: #f0f0f0; }
.vscroll { position: absolute; left: 0; bottom: 2px; display: flex; z-index: 2; }
.vscroll button { width: 12px; height: 12px; background: #d4d0c8; border: 1px solid #555; padding: 0; display: grid; place-items: center; }
.vscroll svg { width: 8px; height: 8px; }
.side { width: 151px; margin-left: 4px; flex: none; display: flex; flex-direction: column; }
.sidehead { height: 27px; display: flex; align-items: center; justify-content: space-between; padding: 0 9px 0 39px; }
.sidehead svg { width: 12px; height: 12px; display: block; }
.tree { flex: 1; border: 1px solid #828790; background: #fff; padding: 2px; }
.root { display: block; width: 56px; height: 14px; padding-left: 4px; background: #d9d9d9; }
.tree ul { list-style: none; margin: 0 0 0 11px; padding: 0; }
.tree li {
  padding-left: 12px;
  background-image: repeating-linear-gradient(90deg, #777 0 1px, #fff 1px 2px), repeating-linear-gradient(#777 0 1px, #fff 1px 2px);
  background-repeat: no-repeat; background-position: 0 7px, 0 0; background-size: 8px 1px, 1px 100%;
}
.tree li:last-child { background-size: 8px 1px, 1px 7px; }
.btabs { height: 20px; flex: none; padding-left: 8px; display: flex; background: repeating-conic-gradient(#fff 0 25%, #ebebeb 0 50%) 0 0 / 2px 2px; }
.btabs button { position: relative; width: 46px; height: 17px; }
.btabs svg { position: absolute; left: 0; top: 0; }
.btabs span { position: relative; }
.vsplit { width: 7px; flex: none; display: flex; align-items: center; }
.vsplit i { width: 6px; height: 100px; border: 1px solid #777; background: #f4f4f4; }

/* data panels */
.main { flex: 1; min-width: 0; display: flex; flex-direction: column; }
.panel { display: grid; grid-template: minmax(0, 1fr) 17px / minmax(0, 1fr) 17px; border: 1px solid #a5a5ad; min-height: 0; padding: 1px 0 1px 1px; background: #fff; }
.top { flex: 1; }
.clip { overflow: hidden; }
.grid { table-layout: fixed; width: 100%; border-collapse: separate; border-spacing: 0; }
.grid th, .grid td { border-right: 1px solid #c0c0c0; border-bottom: 1px solid #c0c0c0; padding: 0 2px; line-height: 12px; overflow: hidden; white-space: nowrap; font-weight: normal; text-align: left; vertical-align: middle; }
.grid tr > :last-child { border-right: 0; }
.grid th { background: #f0f0f0; text-align: center; padding: 0; }
.grid tbody th, .grid .n, .grid .k { font: 10px/12px "DejaVu Sans Mono", monospace; }
.grid .hot { background: linear-gradient(#f9d99f, #f1c15f); }
.grid .sel { background: #ffd28d; }
.grid .pick { background: #d9e9f8; }
.grid .n, .grid .r { text-align: right; padding-right: 3px; }
.grid .c { text-align: center; }
.grid .rem { text-align: left; padding-left: 28px; }
.grid .lock { text-align: left; padding-left: 4px; }
.grid .blue { color: #00f; font: bold 10px/12px "DejaVu Sans", sans-serif; }
.c21 { width: 21px; } .c34 { width: 34px; } .c38 { width: 38px; } .c39 { width: 39px; } .c41 { width: 41px; }
.c49 { width: 49px; } .c57 { width: 57px; } .c75 { width: 75px; } .c81 { width: 81px; } .c109 { width: 109px; }
.c119 { width: 119px; } .c125 { width: 125px; } .c127 { width: 127px; } .c228 { width: 228px; }
.g1 thead tr, .g2 thead tr { height: 21px; }
.h19 { height: 19px; } .h20 { height: 20px; } .h29 { height: 29px; } .h41 { height: 41px; } .h89 { height: 89px; }
.g2 tbody tr { height: 19px; }
.g2 .k { padding-left: 20px; }
.g2 input { width: 13px; height: 13px; border-color: #333; display: block; margin: 0 auto; }
.lv1 td { background-color: #e0f3ff; }
.lv2 td { background-color: #a9dbfb; }

/* tree lines of the code column */
.g1 .k { padding: 0 0 0 50px; background-repeat: no-repeat; --g: linear-gradient(#c0c0c0, #c0c0c0); }
.g1 .leaf { background-image: var(--g), var(--g), var(--g); background-position: 8px 0, 28px 0, 28px 50%; background-size: 1px 100%, 1px 100%, 16px 1px; }
.g1 .end { background-size: 1px 100%, 1px 50%, 16px 1px; }
.g1 .solo { background-image: none, var(--g), var(--g); }
.g1 .stem { background-image: var(--g), var(--g), var(--g); background-position: 8px 0, 28px 0, 28px 50%; background-size: 1px 100%, 1px 100%, 4px 1px; padding-left: 32px; }
.g1 .p1 { background-image: var(--g), var(--g), var(--g); background-position: 8px 0, 8px 50%, 18px 100%; background-size: 1px 50%, 4px 1px, 1px 50%; padding-left: 12px; }
.g1 .p2 { background-image: var(--g), var(--g), var(--g); background-position: 18px 0, 18px 50%, 28px 100%; background-size: 1px 50%, 4px 1px, 1px 50%; padding-left: 22px; }
.k > div { display: flex; align-items: center; gap: 5px; }
.tg { width: 13px; height: 13px; background: #fff; border: 1px solid #b0b0b0; display: grid; }
.tg svg { width: 11px; height: 11px; stroke: #000; }

.vs, .hs { background: #f0f0f0; display: flex; align-items: center; }
.vs { flex-direction: column; padding: 4px 0; }
.hs { grid-column: 1 / -1; padding: 0 22px 0 4px; }
.vs svg, .hs svg { width: 10px; height: 10px; fill: none; stroke: #505050; stroke-width: 2; flex: none; }
.vs i { width: 15px; height: 17px; background: #cdcdcd; margin-top: 3px; }
.vs i.low { margin-top: auto; margin-bottom: 4px; }
.vs .last { margin-top: auto; }
.hs i { width: 17px; height: 15px; background: #cdcdcd; margin-left: 4px; }
.hs i.mid { margin-left: 41%; margin-right: auto; }
.hsplit { height: 8px; flex: none; display: flex; justify-content: center; align-items: center; }
.hsplit i { width: 100px; height: 6px; border: 1px solid #777; background: #f4f4f4; }
.ltabs { display: flex; height: 22px; flex: none; align-items: center; }
.ltabs button { height: 20px; padding: 0 10px 0 11px; border-right: 1px solid #999; }
.ltabs .cur { height: 19px; padding: 0 3px 0 6px; margin: 2px 5px 0 2px; border: 1px solid #777; border-right-color: #fff; border-bottom-color: #fff; background: #f8f8f8; }
.ltabs .cur + button { border-left: 1px solid #999; }
.lower { display: flex; height: 115px; flex: none; }
.lower .panel { flex: 1; min-width: 0; }
.acts { width: 128px; flex: none; display: grid; grid-template-columns: 48px 48px; grid-auto-rows: 23px; gap: 6px; padding: 5px 0 0 12px; }
.acts button { background: #e1e1e1; border: 1px solid #adadad; }
.acts .full { grid-column: 1 / -1; }

.status { display: flex; gap: 2px; height: 22px; flex: none; padding: 1px 0; }
.status span { border: 1px solid #d0d0d0; background: linear-gradient(#f4f4f4, #fff); padding: 2px 0 0 1px; white-space: nowrap; overflow: hidden; flex: 382 1 0; }
.status span:nth-child(3) { flex-grow: 229; } .status span:nth-child(4) { flex-grow: 176; } .status span:nth-child(5) { flex-grow: 189; }

/* taskbar */
.taskbar { display: flex; height: 40px; flex: none; background: #010c11; color: #fff; }
.start { width: 48px; background: #000; display: grid; place-items: center; }
.search { width: 344px; background: #333; display: flex; align-items: center; padding: 0 14px 0 8px; gap: 4px; }
.search input { flex: 1; min-width: 0; border: 0; outline: 0; background: none; font: 14px "Noto Sans CJK SC", sans-serif; padding: 0; }
.search input::placeholder { color: #999; opacity: 1; }
.apps { display: flex; }
.apps button { width: 42px; padding: 0 9px; display: flex; align-items: center; justify-content: center; }
.apps .wd { width: 50px; }
.apps .run { background: linear-gradient(#76b9ed, #76b9ed) 50% 100% / 34px 2px no-repeat; }
.apps .act { background: linear-gradient(#76b9ed, #76b9ed) 50% 100% / 40px 2px no-repeat, #3d474c; }
.apps svg { width: 24px; height: 24px; flex: none; }
.tray { margin-left: auto; display: flex; align-items: center; font-family: "Open Sans", "Noto Sans CJK SC", sans-serif; padding-right: 24px; }
.cpu, time { text-align: center; line-height: 18px; }
.cpu { margin: 0 17px 0 19px; }
time { margin: 0 22px; }
.ti { display: flex; gap: 6px; }
.tray svg { fill: none; stroke: #fff; width: 18px; height: 18px; flex: none; }
.tray .kb { width: 23px; height: 14px; margin: 0 10px 0 7px; }
.zh { font-size: 13px; margin-right: 14px; }
.tray .sgi { width: 16px; height: 16px; stroke: none; }

/* overlays */
.mark { position: absolute; left: 181px; top: 393px; width: 508px; height: 124px; pointer-events: none; }
.ime { position: absolute; right: 0; top: 677px; height: 24px; width: 207px; background: #fff; border: 1px solid #b9d5ec; border-right: 0; display: flex; align-items: center; justify-content: space-between; padding-right: 3px; }
.ime svg { width: 17px; height: 17px; flex: none; }
.ime .big { width: 28px; height: 28px; }
.ime strong { color: #1f6fc5; font-size: 16px; }
```
